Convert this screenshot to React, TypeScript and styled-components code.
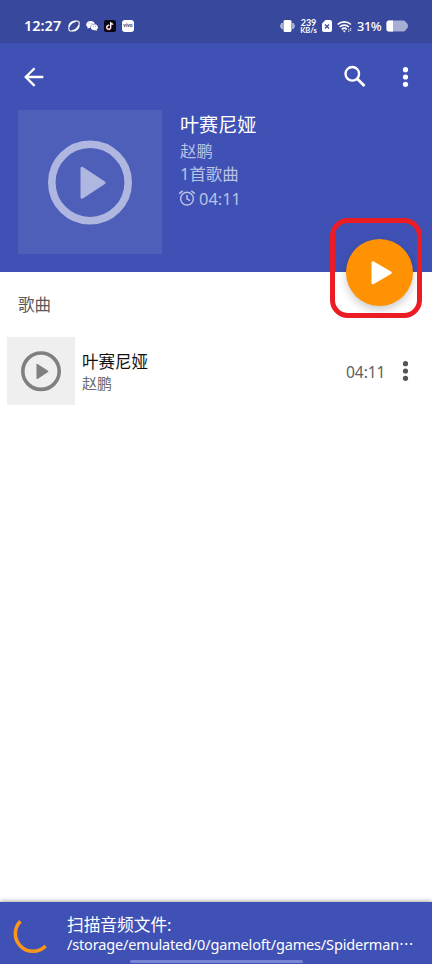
import React from "react";
import styled, { createGlobalStyle } from "styled-components";

const GlobalStyle = createGlobalStyle`
  * { box-sizing: border-box; }
  body { margin: 0; background: #fff; font-family: "Noto Sans", "Noto Sans CJK SC", sans-serif; }
  svg { display: block; flex: none; overflow: visible; }
`;

const Screen = styled.div`
  width: 432px;
  height: 964px;
  display: flex;
  flex-direction: column;
  background: #fff;
  overflow: hidden;
`;

const StatusBar = styled.div`
  height: 43px;
  flex: none;
  display: flex;
  align-items: center;
  justify-content: space-between;
  padding: 9px 24px 0 24px;
  background: #38489c;
  color: #fff;
`;

const StatusGroup = styled.div<{ $gap: number }>`
  display: flex;
  align-items: center;
  gap: ${(p) => p.$gap}px;
`;

const Clock = styled.span`
  width: 38px;
  font: 600 14.5px/18px "Noto Sans", sans-serif;
  padding-bottom: 2px;
  white-space: nowrap;
`;

const NetSpeed = styled.div`
  width: 19px;
  display: flex;
  flex-direction: column;
  align-items: center;
  font: 700 9px/9px "Lato", sans-serif;
  white-space: nowrap;
`;

const SpeedUnit = styled.span`
  font-size: 7.5px;
  line-height: 8px;
`;

const Percent = styled.span`
  width: 25px;
  margin-left: 1px;
  font: 500 12.8px/20px "Noto Sans", sans-serif;
  letter-spacing: -0.4px;
  white-space: nowrap;
`;

const VivoBadge = styled.span`
  width: 12px;
  height: 12px;
  border-radius: 3px;
  background: #fff;
  color: #3a4478;
  font: 700 4.5px/11px "Noto Sans", sans-serif;
  text-align: center;
`;

const Header = styled.header`
  position: relative;
  height: 229px;
  flex: none;
  background: #3f51b5;
`;

const Toolbar = styled.div`
  height: 67px;
  display: flex;
  align-items: center;
  padding: 0 19px 0 20px;
`;

const IconButton = styled.button`
  display: flex;
  padding: 0;
  border: 0;
  background: none;
  color: inherit;
`;

const ToolbarActions = styled.div`
  margin-left: auto;
  display: flex;
  align-items: center;
  gap: 27px;
  color: #fff;
`;

const Album = styled.div`
  display: flex;
  padding-left: 18px;
  gap: 18px;
`;

const Cover = styled.div<{ $size: number; $bg: string; $fg: string }>`
  width: ${(p) => p.$size}px;
  height: ${(p) => p.$size}px;
  flex: none;
  display: flex;
  align-items: center;
  justify-content: center;
  background: ${(p) => p.$bg};
  color: ${(p) => p.$fg};
`;

const AlbumInfo = styled.div`
  display: flex;
  flex-direction: column;
  color: #bbc1e5;
  font-size: 16.4px;
  line-height: 23px;
`;

const AlbumTitle = styled.h1`
  margin: 3px 0 1px;
  font-size: 19.1px;
  line-height: 25px;
  font-weight: 400;
  color: #fff;
`;

const Duration = styled.div`
  display: flex;
  align-items: center;
  gap: 3px;
  margin: 2px 0 0 -2px;
  line-height: 24px;
`;

const Fab = styled.button`
  position: absolute;
  left: 346px;
  top: 196px;
  width: 67px;
  height: 67px;
  display: flex;
  align-items: center;
  justify-content: center;
  padding: 0;
  border: 0;
  border-radius: 50%;
  background: #ff9203;
  box-shadow: 0 4px 9px rgba(0, 0, 0, 0.2);
`;

const Highlight = styled.div`
  position: absolute;
  left: 330px;
  top: 175px;
  width: 92px;
  height: 100px;
  border: 5px solid #ec1c24;
  border-radius: 18px;
  pointer-events: none;
`;

const Songs = styled.main`
  flex: 1;
`;

const SectionTitle = styled.h2`
  margin: 0;
  padding: 21px 18px 0;
  height: 65px;
  font-size: 16.5px;
  line-height: 24px;
  font-weight: 400;
  color: #585858;
`;

const SongRow = styled.div`
  display: flex;
  align-items: center;
  height: 68px;
  padding: 0 19px 0 7px;
`;

const SongText = styled.div`
  flex: 1;
  padding: 2px 0 0 7px;
  color: #101010;
  font-size: 16.5px;
  line-height: 22px;
`;

const Artist = styled.div`
  font-size: 15px;
  line-height: 21px;
  color: #6c6c6c;
`;

const SongTime = styled.span`
  width: 51px;
  padding-top: 2px;
  font-size: 15.6px;
  letter-spacing: -0.1px;
  color: #606060;
`;

const ScanBar = styled.footer`
  height: 62px;
  flex: none;
  display: grid;
  grid-template: 58px 3px / 67px 347px;
  background: #3f51b5;
  color: #fff;
  box-shadow: 0 -1px 4px rgba(0, 0, 0, 0.35);
`;

const ScanSpinner = styled.div`
  padding: 11px 0 0 13px;
`;

const ScanText = styled.div`
  padding-top: 12px;
  font-size: 16.7px;
  line-height: 21px;
  white-space: nowrap;
`;

const ScanPath = styled.div`
  font-size: 14.5px;
  line-height: 19px;
  letter-spacing: -0.16px;
`;

const Ellipsis = styled.span`
  display: inline-block;
  font-family: "Noto Sans CJK SC", sans-serif;
  line-height: 15px;
`;

const HomeIndicator = styled.div`
  grid-column: 1 / -1;
  width: 173px;
  height: 3px;
  margin-left: 130px;
  border-radius: 2px;
  background: #7885d3;
`;

const PlayCircle = ({ size }: { size: number }) => (
  <svg width={size} height={size} viewBox="0 0 84 84">
    <circle cx="42" cy="42.5" r="38.2" fill="none" stroke="currentColor" strokeWidth="7.6" />
    <path d="M34 28.3v29l22-14.5z" fill="currentColor" stroke="currentColor" strokeWidth="3" strokeLinejoin="round" />
  </svg>
);

const MoreDots = () => (
  <svg width="16" height="24" viewBox="0 0 16 24" fill="currentColor">
    <circle cx="8.5" cy="4.7" r="2.6" />
    <circle cx="8.5" cy="12" r="2.6" />
    <circle cx="8.5" cy="19.3" r="2.6" />
  </svg>
);

const MoreButton = styled(IconButton)`
  color: #555;
  width: 16px;
`;

export default function App() {
  return (
    <>
      <GlobalStyle />
      <Screen>
        <StatusBar>
          <StatusGroup $gap={6}>
            <Clock>12:27</Clock>
            <svg width="12" height="12" viewBox="0 0 12 12" fill="none" stroke="#fff">
              <ellipse cx="6" cy="6" rx="6.4" ry="3.5" transform="rotate(-42 6 6)" strokeWidth="1.1" />
              <path d="M1 6.800C1.300 3.300 4.200 1.200 7.500 1.400M11 5.200c-.3 3.500-3.200 5.600-6.500 5.400" strokeWidth="1.6" />
            </svg>
            <svg width="12" height="12" viewBox="0 0 12 12">
              <path d="M4.7 1C2.2 1 .2 2.6.2 4.6c0 1.1.6 2.1 1.6 2.7l-.4 1.4L3 7.9l1.4.2C4.1 5.6 6.1 3.8 9 3.8 8.5 2.2 6.8 1 4.7 1z" fill="#fff" />
              <path d="M8.4 4.3c-2 0-3.6 1.3-3.6 3s1.600 3 3.600 3l1-.1 1.400.8-.3-1.200c.9-.6 1.400-1.500 1.400-2.500 0-1.700-1.600-3-3.500-3z" fill="#fff" />
              <g fill="#7782bd"><circle cx="3.1" cy="3.7" r=".5" /><circle cx="6" cy="3.3" r=".5" /><circle cx="7.3" cy="6.5" r=".5" /><circle cx="9.7" cy="6.5" r=".5" /></g>
            </svg>
            <svg width="12" height="12" viewBox="0 0 12 12">
              <rect width="12" height="12" rx="2" fill="#080817" />
              <path d="M5.200 5.500a2 2 0 1 0 1.400 2V2.200c.2 1.400 1.100 2.100 2.500 2.200" fill="none" stroke="#ee315d" strokeWidth="1.3" transform="translate(.3 .3)" />
              <path d="M5.200 5.300a2 2 0 1 0 1.400 2V2c.2 1.400 1.100 2.100 2.500 2.200" fill="none" stroke="#fff" strokeWidth="1.2" />
            </svg>
            <VivoBadge>vivo</VivoBadge>
          </StatusGroup>
          <StatusGroup $gap={4}>
            <svg width="15" height="14" viewBox="0 0 15 14">
              <rect x="3.5" y="1" width="8" height="12" rx="1.6" fill="#fff" />
              <path d="M2 4v6M13 4v6" stroke="#c9cee7" strokeWidth="1.5" />
              <path d="M.5 5.500v3M14.500 5.500v3" stroke="#9da6cf" />
            </svg>
            <NetSpeed><span>239</span><SpeedUnit>KB/s</SpeedUnit></NetSpeed>
            <svg width="11" height="12" viewBox="0 0 11 12">
              <path d="M3.5 0H8q2 0 2 2v8q0 2-2 2H2q-2 0-2-2V3.5z" fill="#fff" />
              <path d="M3 4.500l4 4m0-4l-4 4" stroke="#38489c" strokeWidth="1.2" />
            </svg>
            <svg width="15" height="13" viewBox="0 0 15 13">
              <path d="M.7 4.500a9.500 9.500 0 0 1 13.200 0M2.700 7a6.600 6.600 0 0 1 9.200 0M4.800 9.300a3.600 3.600 0 0 1 5 0" fill="none" stroke="#fff" strokeWidth="1.6" />
              <path d="M5.700 10.400h3.200L7.300 12.500z" fill="#fff" />
              <path d="M11.800 9v3M13.700 8v3" stroke="#d4d9ef" strokeWidth="1.1" strokeDasharray="1.3 .5" />
            </svg>
            <Percent>31%</Percent>
            <svg width="22" height="12" viewBox="0 0 22 12">
              <path d="M3 .5h14.500Q19.500.5 20 2.500q2 .5 2 3.500t-2 3.500q-.5 2-2.500 2H3q-2.500 0-2.500-2.500V3Q.5.5 3 .5z" fill="#a6aed5" />
              <path d="M7 .5H3Q.5.5.5 3v6q0 2.500 2.500 2.500h4z" fill="#fff" />
            </svg>
          </StatusGroup>
        </StatusBar>
        <Header>
          <Toolbar>
            <IconButton aria-label="返回">
              <svg width="26" height="26" viewBox="0 0 26 26" fill="none" stroke="#fff" strokeWidth="2.3">
                <path d="M23.300 13H6M14.600 4.200L5.700 13l8.900 8.900" />
              </svg>
            </IconButton>
            <ToolbarActions>
              <IconButton aria-label="搜索">
                <svg width="30" height="26" viewBox="0 0 30 26" fill="none" stroke="currentColor">
                  <circle cx="12.3" cy="9.8" r="6.8" strokeWidth="2.4" />
                  <path d="M17.200 14.700l7.300 7.300" strokeWidth="2.8" />
                </svg>
              </IconButton>
              <IconButton aria-label="更多"><MoreDots /></IconButton>
            </ToolbarActions>
          </Toolbar>
          <Album>
            <Cover $size={144} $bg="#4e5fba" $fg="#afb6df"><PlayCircle size={84} /></Cover>
            <AlbumInfo>
              <AlbumTitle>叶赛尼娅</AlbumTitle>
              <span>赵鹏</span>
              <span>1首歌曲</span>
              <Duration>
                <svg width="18" height="18" viewBox="0 0 18 18" fill="none" stroke="currentColor" strokeWidth="1.5">
                  <circle cx="9" cy="8.7" r="6.4" />
                  <path d="M9 4.900v4l3 1.800M1.200 3.700l3.500-2.900M16.800 3.700l-3.500-2.900" />
                </svg>
                04:11
              </Duration>
            </AlbumInfo>
          </Album>
          <Fab aria-label="播放">
            <svg width="26" height="26" viewBox="0 0 26 26">
              <path d="M6 2.800v20L23.200 12.800z" fill="#fff" stroke="#fff" strokeWidth="3" strokeLinejoin="round" />
            </svg>
          </Fab>
          <Highlight />
        </Header>
        <Songs>
          <SectionTitle>歌曲</SectionTitle>
          <SongRow>
            <Cover $size={68} $bg="#efefef" $fg="#808080"><PlayCircle size={40} /></Cover>
            <SongText>
              叶赛尼娅
              <Artist>赵鹏</Artist>
            </SongText>
            <SongTime>04:11</SongTime>
            <MoreButton aria-label="更多"><MoreDots /></MoreButton>
          </SongRow>
        </Songs>
        <ScanBar>
          <ScanSpinner>
            <svg width="40" height="40" viewBox="0 0 40 40">
              <path d="M7.400 8.300A17.200 17.200 0 0 0 32.600 33" fill="none" stroke="#fb961d" strokeWidth="3.6" />
            </svg>
          </ScanSpinner>
          <ScanText>
            扫描音频文件:
            <ScanPath>/storage/emulated/0/gameloft/games/Spiderman<Ellipsis>⋯</Ellipsis></ScanPath>
          </ScanText>
          <HomeIndicator />
        </ScanBar>
      </Screen>
    </>
  );
}
